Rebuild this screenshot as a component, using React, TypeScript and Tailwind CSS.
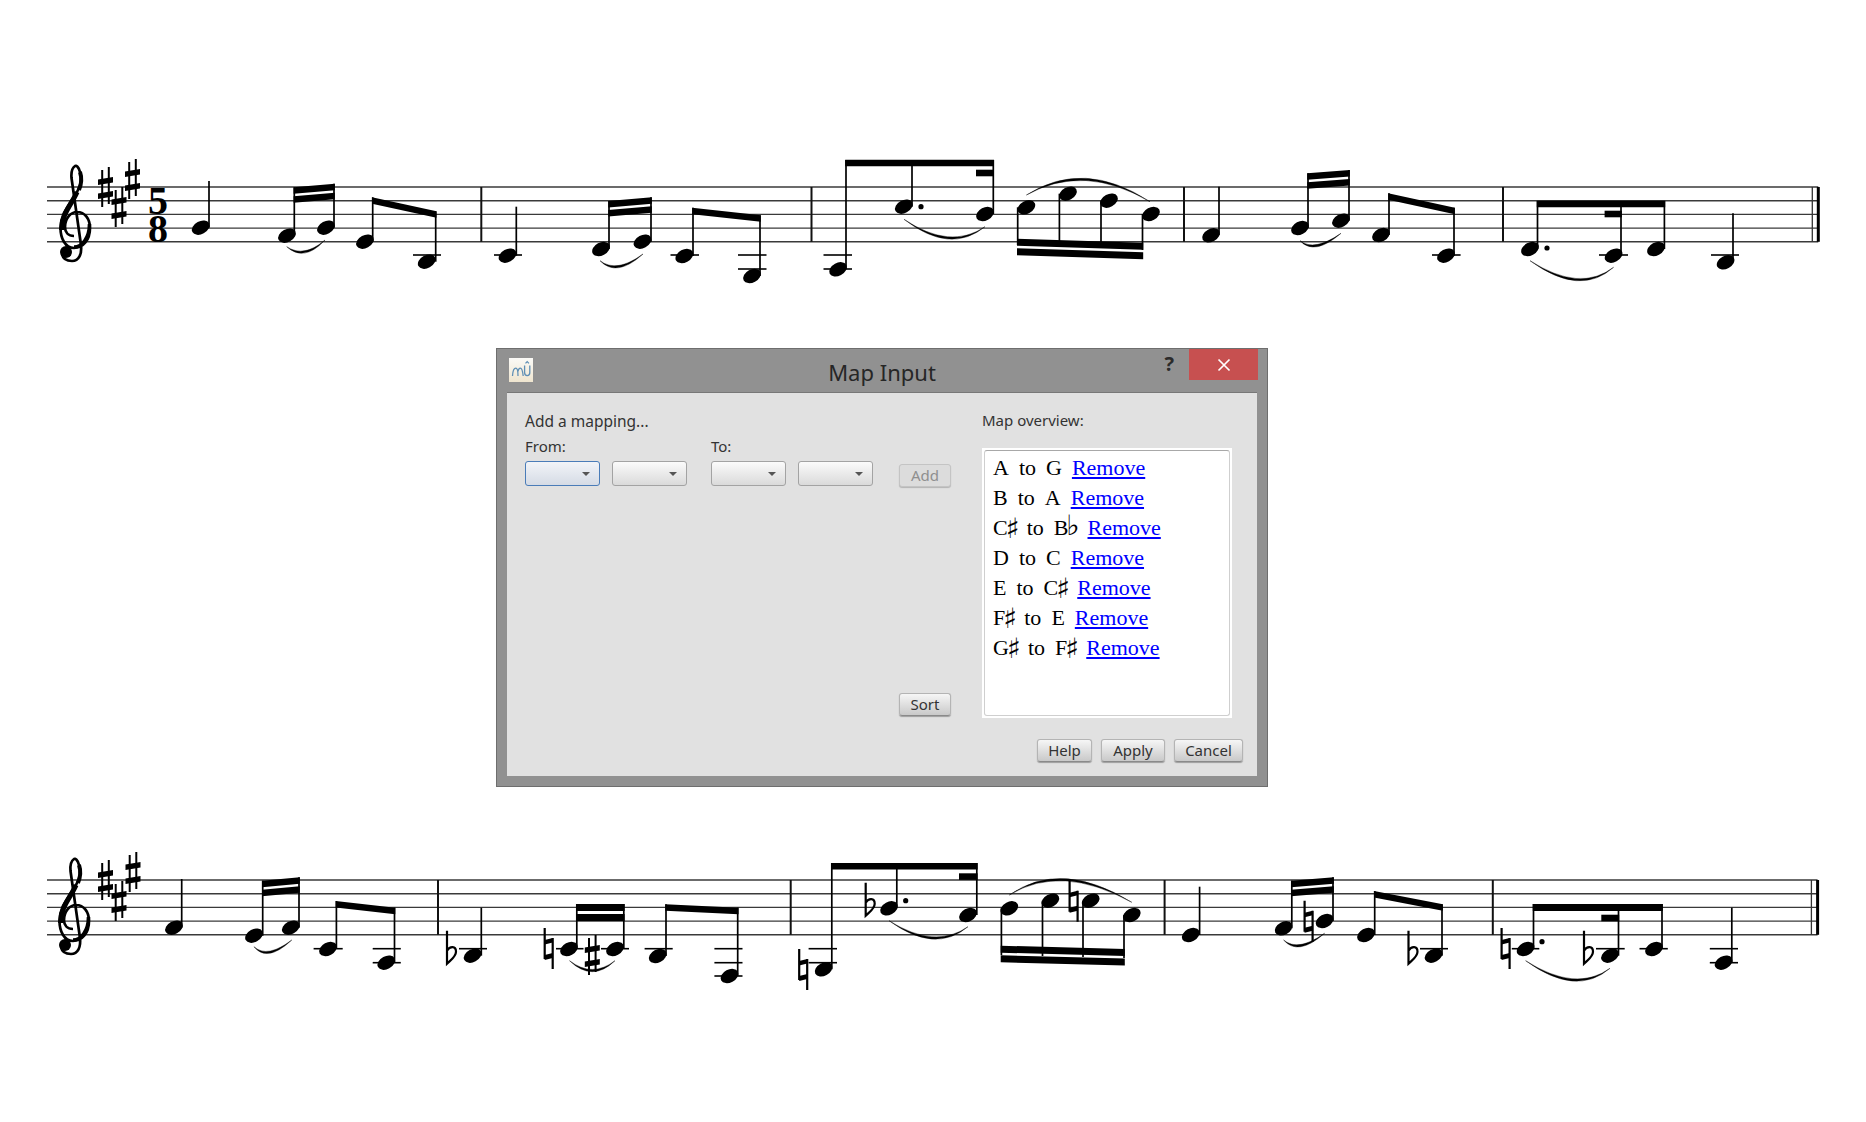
import type { ReactNode } from 'react'

type Nums = number[][]

// head x, head y, stem x, stem end y
const notesTop: Nums = [
  [200.7, 227.7, 209, 181],
  [287, 235.7, 294.3, 187.3], [326, 227.7, 334, 183.7],
  [365, 241.7, 372.7, 197.3], [426.7, 261.7, 435.7, 211.3],
  [507.5, 255.7, 516.3, 206.7],
  [601, 249, 609, 201], [642.5, 241.7, 651, 197.3],
  [684.3, 256, 693, 207.7], [752, 276, 760, 215.3],
  [838, 269.3, 846, 160], [903.8, 206.7, 912, 160], [985, 214, 993.3, 160],
  [1026.4, 207.3, 1017.7, 245], [1068, 193.7, 1059.4, 247], [1109, 200.7, 1101, 248], [1151, 214, 1142.5, 250],
  [1211, 235.3, 1219, 186.7],
  [1300, 228, 1308, 173.3], [1341, 220.7, 1349, 170],
  [1381, 235, 1389, 193.3], [1446, 255.7, 1454, 207.7],
  [1530, 249, 1537.5, 201], [1613.6, 255.7, 1621, 201], [1656, 249, 1664.4, 201],
  [1725.6, 262.3, 1733, 213.3],
]

// x1, y1, x2, y2, thickness, gap to a second beam (0 = single)
const beamsTop: Nums = [
  [293.6, 187.3, 334.8, 183.7, 6.5, 9],
  [372, 197.3, 436.5, 211.3, 6.5, 0],
  [608.3, 201, 651.8, 197.3, 6.5, 9],
  [692.2, 207.7, 760.8, 215.3, 6.5, 0],
  [845.2, 159.7, 994, 159.7, 6.6, 0],
  [976, 169.7, 994, 169.7, 6.6, 0],
  [1017, 238.7, 1143.2, 242.7, 7, 9.6],
  [1307.3, 173.3, 1349.8, 170, 6.5, 9],
  [1388.2, 193.3, 1454.8, 207.7, 6.5, 0],
  [1536.8, 200.7, 1665.2, 200.7, 6.6, 0],
  [1604.6, 210.7, 1621.8, 210.7, 6.6, 0],
]

// x1, x2, y
const ledgersTop: Nums = [
  [413, 441, 255], [494, 522, 255], [670.5, 699, 255], [738, 766.5, 255], [738, 766.5, 269],
  [823.5, 852, 255], [823.5, 852, 269], [1432, 1460.6, 255], [1599, 1628, 255], [1711, 1739, 255],
]

// start, lowest or highest point, end
const slursTop: Nums = [
  [286.7, 246.7, 305, 253, 325, 240],
  [600, 260.7, 619, 267.7, 643, 254],
  [904, 219.3, 947.4, 239, 985, 226.7],
  [1026.4, 195, 1086, 178.3, 1150, 201.7],
  [1300, 240.7, 1317.4, 246.7, 1341, 233.3],
  [1530, 260.7, 1576, 280.7, 1613.6, 267.3],
]

const notesBottom: Nums = [
  [174, 927.7, 181.7, 879],
  [254, 935.7, 262.7, 880.7], [290.8, 927.7, 299, 877.3],
  [328, 949, 336.4, 901], [386.3, 962.7, 394.5, 907.7],
  [472.6, 955.7, 481.3, 907.7],
  [569, 949, 576.8, 904], [615, 949, 623.8, 904],
  [657.7, 956, 666, 904.3], [729.5, 976, 737.7, 907.7],
  [823.6, 969.3, 831.8, 863], [889, 908.3, 896.8, 863], [968, 915, 976.8, 863],
  [1009.3, 908.3, 1001.4, 955], [1050.4, 900.7, 1042.5, 956], [1090.7, 900.7, 1083, 957], [1131.8, 915, 1124, 958],
  [1190.7, 935, 1199.6, 886.7],
  [1283.6, 928.3, 1291.8, 880.7], [1324.6, 921, 1333, 877.3],
  [1366, 935, 1374.7, 891], [1433.6, 955.7, 1442, 904.3],
  [1525.6, 949, 1533.5, 904], [1610, 955.7, 1618.5, 904], [1654, 949, 1662, 904],
  [1723.6, 962.7, 1731.8, 907.7],
]

const beamsBottom: Nums = [
  [262, 880.7, 299.8, 877.3, 6.5, 9],
  [335.7, 901, 395.3, 907.7, 6.5, 0],
  [576, 904, 624.6, 904, 7, 10],
  [665.3, 904.3, 738.5, 907.7, 6.5, 0],
  [831, 863, 977.6, 863, 6.6, 0],
  [959, 873.3, 977.6, 873.3, 6.6, 0],
  [1000.7, 945.7, 1124.8, 949, 7, 9.6],
  [1291, 880.7, 1333.8, 877.3, 6.5, 9],
  [1374, 891, 1442.8, 904.3, 6.5, 0],
  [1532.8, 904, 1662.8, 904, 7, 0],
  [1601.3, 914.7, 1619.2, 914.7, 6.6, 0],
]

const ledgersBottom: Nums = [
  [313.6, 342.7, 948.7], [372.7, 400.8, 948.7], [372.7, 400.8, 962.7],
  [459, 487, 948.7], [556, 583.5, 948.7], [601, 629, 948.7], [644.6, 672.7, 948.7],
  [714.4, 742.5, 948.7], [714.4, 742.5, 962.7], [714.4, 742.5, 976],
  [808.6, 837, 948.7], [808.6, 837, 962.7],
  [1420, 1448, 948.7], [1511.8, 1539.3, 948.7], [1596, 1624.7, 948.7], [1639.5, 1667.8, 948.7],
  [1709.8, 1738, 948.7], [1709.8, 1738, 962.7],
]

const slursBottom: Nums = [
  [254, 946.7, 270, 953.3, 291.8, 940],
  [569.5, 960.7, 592.3, 971.7, 615, 960.7],
  [889, 920.7, 931.8, 939, 968, 926.7],
  [1009.3, 895, 1065.7, 878.7, 1131.8, 902.3],
  [1283.6, 940, 1301, 946.7, 1324.6, 933.3],
  [1525.6, 960.7, 1572, 981, 1610, 968.3],
]

function Sharp({ x, y }: { x: number; y: number }) {
  return (
    <g>
      <path d={`M${x - 3.3} ${y - 17}V${y + 20}M${x + 3.3} ${y - 20}V${y + 17}`} stroke="#000" strokeWidth={2} />
      <path d={`M${x - 7.5} ${y - 7.5}L${x + 7.5} ${y - 10}V${y - 4.5}L${x - 7.5} ${y - 2}ZM${x - 7.5} ${y + 6.5}L${x + 7.5} ${y + 4}V${y + 9.5}L${x - 7.5} ${y + 12}Z`} />
    </g>
  )
}

function Flat({ x, top }: { x: number; top: number }) {
  return (
    <path
      d={`M${x} ${top}V${top + 33}C${x + 4} ${top + 29} ${x + 9} ${top + 26} ${x + 9} ${top + 21}C${x + 9} ${top + 15} ${x + 3} ${top + 15} ${x} ${top + 20}`}
      fill="none"
      stroke="#000"
      strokeWidth={2.2}
    />
  )
}

function Natural({ x, top }: { x: number; top: number }) {
  return (
    <g>
      <path d={`M${x - 4} ${top}V${top + 31}M${x + 4} ${top + 10}V${top + 41}`} stroke="#000" strokeWidth={2.2} />
      <path d={`M${x - 4} ${top + 12}L${x + 4} ${top + 10}V${top + 14.5}L${x - 4} ${top + 16.5}ZM${x - 4} ${top + 27}L${x + 4} ${top + 25}V${top + 30}L${x - 4} ${top + 32}Z`} />
    </g>
  )
}

function Clef({ dx, dy }: { dx: number; dy: number }) {
  return (
    <g transform={`translate(${dx} ${dy})`} fill="none" stroke="#000">
      <path
        strokeWidth={2.7}
        d="M74 236C68 236 65 232 65 227C65 218 71 212 77 212C85 212 90 219 90 228C90 240 83 248 74 248C65 248 60.5 238 60.5 228C60.5 212 72 202 78 190C81 184 82 178 80 172C79 167 76 165 75 166C72 168 71 172 71.5 178L81 245C82 254 79 261 72 261C67 261 63 259 62 254"
      />
      <path strokeWidth={5} d="M61.5 230C61.5 214 72 204 77 192" />
      <path strokeWidth={4} d="M79 190C81.5 184 82 178 80 172" />
      <path strokeWidth={3.6} d="M89.5 224C89.5 238 82 247 74 247" />
      <circle cx={66} cy={252} r={6} fill="#000" stroke="none" />
    </g>
  )
}

function Staff({
  top,
  viewTop,
  bars,
  end,
  notes,
  beams,
  ledgers,
  slurs,
  dots,
  children,
}: {
  top: number
  viewTop: number
  bars: number[]
  end: number[]
  notes: Nums
  beams: Nums
  ledgers: Nums
  slurs: Nums
  dots: Nums
  children: ReactNode
}) {
  return (
    <svg width={1866} height={160} viewBox={`0 ${viewTop} 1866 160`} className="block">
      {[0, 1, 2, 3, 4].map((i) => (
        <line key={i} x1={47} x2={end[1]} y1={top + i * 13.7} y2={top + i * 13.7} stroke="#3a3a3a" strokeWidth={1.4} />
      ))}
      {bars.map((x) => (
        <line key={x} x1={x} x2={x} y1={top} y2={top + 54.8} stroke="#111" strokeWidth={2} />
      ))}
      <line x1={end[0]} x2={end[0]} y1={top} y2={top + 54.8} stroke="#333" strokeWidth={1.3} />
      <line x1={end[1]} x2={end[1]} y1={top} y2={top + 54.8} stroke="#000" strokeWidth={3} />
      {ledgers.map(([a, b, y], i) => (
        <line key={i} x1={a} x2={b} y1={y} y2={y} stroke="#000" strokeWidth={1.6} />
      ))}
      {notes.map(([hx, hy, sx, se], i) => (
        <g key={i}>
          <line x1={sx} x2={sx} y1={hy} y2={se} stroke="#000" strokeWidth={1.7} />
          <ellipse cx={hx} cy={hy} rx={9.4} ry={6.4} transform={`rotate(-28 ${hx} ${hy})`} />
        </g>
      ))}
      {beams.map(([x1, y1, x2, y2, t, gap], i) => (
        <g key={i}>
          <polygon points={`${x1},${y1} ${x2},${y2} ${x2},${y2 + t} ${x1},${y1 + t}`} />
          {gap > 0 && <polygon points={`${x1},${y1 + gap} ${x2},${y2 + gap} ${x2},${y2 + gap + t} ${x1},${y1 + gap + t}`} />}
        </g>
      ))}
      {slurs.map(([x1, y1, mx, my, x2, y2], i) => {
        const cx = 2 * mx - (x1 + x2) / 2
        const cy = 2 * my - (y1 + y2) / 2
        const back = cy > (y1 + y2) / 2 ? cy - 4.5 : cy + 4.5
        return <path key={i} d={`M${x1} ${y1}Q${cx} ${cy} ${x2} ${y2}Q${cx} ${back} ${x1} ${y1}Z`} stroke="#000" strokeWidth={0.4} />
      })}
      {dots.map(([x, y], i) => (
        <circle key={i} cx={x} cy={y} r={2.6} />
      ))}
      {children}
    </svg>
  )
}

function Combo({ focused }: { focused?: boolean }) {
  return (
    <div
      className={
        focused
          ? 'w-[75px] h-[25px] flex items-center justify-end pr-[9px] rounded-[3px] border border-[#4a7cb8] bg-gradient-to-b from-[#f2f4f8] to-[#d5dbe5]'
          : 'w-[75px] h-[25px] flex items-center justify-end pr-[9px] rounded-[3px] border border-[#a3a3a3] bg-gradient-to-b from-[#fbfbfb] to-[#dadada]'
      }
    >
      <span className="w-0 h-0 border-x-[4px] border-x-transparent border-t-[4px] border-t-[#555]" />
    </div>
  )
}

function Btn({ width, label, disabled }: { width: string; label: string; disabled?: boolean }) {
  return (
    <button
      type="button"
      className={
        disabled
          ? `${width} h-[23px] rounded-[3px] border border-[#c4c4c4] bg-[#dcdcdc] text-[#8f8f8f] text-[15px] leading-none shadow-[0_1px_1px_rgba(0,0,0,0.2)]`
          : `${width} h-[23px] rounded-[3px] border border-[#b4b4b4] border-b-[#8a8a8a] bg-gradient-to-b from-[#f6f6f6] to-[#c9c9c9] text-[#333] text-[15px] leading-none shadow-[0_1px_1px_rgba(0,0,0,0.3)]`
      }
    >
      {label}
    </button>
  )
}

// sharps hang below the baseline, flats stand on it
function SharpSign() {
  return <span className="inline-block w-[9px] font-['DejaVu_Sans'] text-[28px] leading-[0] translate-y-[3px] -translate-x-[2px]">♯</span>
}

function FlatSign() {
  return <span className="inline-block w-[9px] font-['DejaVu_Sans'] text-[28px] leading-[0] -translate-x-[2px]">♭</span>
}

const gap = '\u00a0\u00a0'

function MapRow({ children }: { children: ReactNode }) {
  return (
    <div className="h-[30px] leading-[30px] whitespace-nowrap [word-spacing:-0.5px]">
      {children}
      {gap}
      <a href="#remove" className="text-[#0000ff] underline">Remove</a>
    </div>
  )
}

export default function App() {
  return (
    <div className="w-[1866px] h-[1122px] bg-white overflow-hidden pt-[140px] font-['Noto_Sans',sans-serif]">
      <Staff
        top={187}
        viewTop={140}
        bars={[481.3, 811.5, 1184, 1503]}
        end={[1812.3, 1818.3]}
        notes={notesTop}
        beams={beamsTop}
        ledgers={ledgersTop}
        slurs={slursTop}
        dots={[[921, 206.7], [1547, 248]]}
      >
        <Clef dx={0} dy={0} />
        <Sharp x={105.5} y={187} />
        <Sharp x={119} y={207} />
        <Sharp x={132.5} y={179} />
        <text textAnchor="middle" fontFamily="Liberation Serif" fontWeight={700} fontSize={40}>
          <tspan x={158} y={214}>5</tspan>
          <tspan x={158} y={241.5}>8</tspan>
        </text>
      </Staff>

      <div className="ml-[496px] mt-[48px] w-[772px] h-[439px] flex flex-col border border-[#6e6e6e] bg-[#919191]">
        <div className="h-[43px] shrink-0 grid grid-cols-[1fr_auto_1fr]">
          <div className="pl-[12px] pt-[9px]">
            <div className="w-[24px] h-[24px] bg-gradient-to-b from-[#fbfaf7] to-[#efe5cf]">
              <svg viewBox="0 0 24 24" width={24} height={24} fill="none" stroke="#5f8fb5" strokeWidth={1.3}>
                <path d="M3.5 18C3.8 13 5 10.2 6.8 10.2C8.6 10.2 9 13 9 18M9 13.5C9.4 11 10.4 10.2 11.4 10.2C13 10.2 13.6 13 14.2 18" />
                <path d="M15.6 7.5V14.5C15.6 16.8 16.8 17.6 18.2 17.6C19.6 17.6 20.8 16.8 20.8 14.5V7.5" />
                <path d="M16.5 5.4L18.2 3.6L19.9 5.4" />
              </svg>
            </div>
          </div>
          <div className="pt-[8px] text-[22px] leading-[30px] text-[#262626]">Map Input</div>
          <div className="flex justify-end pr-[9px]">
            <span className="mr-[15px] pt-[3px] font-bold text-[20px] leading-[24px] text-[#2b2b2b]">?</span>
            <div className="w-[69px] h-[31px] flex items-center justify-center bg-[#c75050]">
              <svg viewBox="0 0 14 14" width={14} height={14} stroke="#fff" strokeWidth={1.7}>
                <path d="M1.5 1.5L12.5 12.5M12.5 1.5L1.5 12.5" />
              </svg>
            </div>
          </div>
        </div>

        <div className="mx-[10px] mb-[10px] flex-1 flex flex-col border-t border-[#777] bg-[#e1e1e1] text-[15px] text-[#333]">
          <div className="h-[326px] flex pl-[18px]">
            <div className="w-[457px] flex flex-col">
              <div className="mt-[18px] h-[20px] leading-[20px] text-[15.5px]">Add a mapping...</div>
              <div className="mt-[5px] h-[20px] leading-[20px] flex">
                <span className="w-[186px]">From:</span>
                <span>To:</span>
              </div>
              <div className="mt-[5px] flex items-start">
                <Combo focused />
                <div className="ml-[12px]"><Combo /></div>
                <div className="ml-[24px]"><Combo /></div>
                <div className="ml-[12px]"><Combo /></div>
                <div className="ml-[26px] mt-[3px]"><Btn width="w-[52px]" label="Add" disabled /></div>
              </div>
              <div className="mt-auto mb-[3px] ml-[374px]">
                <Btn width="w-[52px]" label="Sort" />
              </div>
            </div>
            <div className="flex flex-col">
              <div className="mt-[17px] h-[20px] leading-[20px]">Map overview:</div>
              <div className="mt-[18px] w-[250px] h-[270px] bg-white p-[2px]">
                <div className="h-full w-[246px] pt-[2px] pl-[8px] rounded-[3px] border border-[#cfcfcf] border-t-[#a8a8a8] font-['Liberation_Serif',serif] text-[22px] text-black">
                  <MapRow>A{gap}to{gap}G</MapRow>
                  <MapRow>B{gap}to{gap}A</MapRow>
                  <MapRow>C<SharpSign />{gap}to{gap}B<FlatSign /></MapRow>
                  <MapRow>D{gap}to{gap}C</MapRow>
                  <MapRow>E{gap}to{gap}C<SharpSign /></MapRow>
                  <MapRow>F<SharpSign />{gap}to{gap}E</MapRow>
                  <MapRow>G<SharpSign />{gap}to{gap}F<SharpSign /></MapRow>
                </div>
              </div>
            </div>
          </div>
          <div className="mt-[20px] pr-[14px] flex justify-end gap-[9px]">
            <Btn width="w-[55px]" label="Help" />
            <Btn width="w-[64px]" label="Apply" />
            <Btn width="w-[69px]" label="Cancel" />
          </div>
        </div>
      </div>

      <div className="mt-[53px]">
        <Staff
          top={880}
          viewTop={840}
          bars={[438, 790.7, 1164.6, 1492.8]}
          end={[1811.4, 1817.6]}
          notes={notesBottom}
          beams={beamsBottom}
          ledgers={ledgersBottom}
          slurs={slursBottom}
          dots={[[905.7, 900.7], [1542, 941.7]]}
        >
          <Clef dx={-1} dy={693} />
          <Sharp x={105.5} y={880} />
          <Sharp x={119} y={901} />
          <Sharp x={133} y={872} />
          <Flat x={447} top={930.7} />
          <Natural x={548.7} top={928} />
          <Sharp x={592.3} y={955} />
          <Natural x={803.2} top={949} />
          <Flat x={865.7} top={882.7} />
          <Natural x={1073.6} top={880.7} />
          <Natural x={1308.6} top={900.7} />
          <Flat x={1408.5} top={930.7} />
          <Natural x={1505.6} top={928} />
          <Flat x={1584} top={930.7} />
        </Staff>
      </div>
    </div>
  )
}
